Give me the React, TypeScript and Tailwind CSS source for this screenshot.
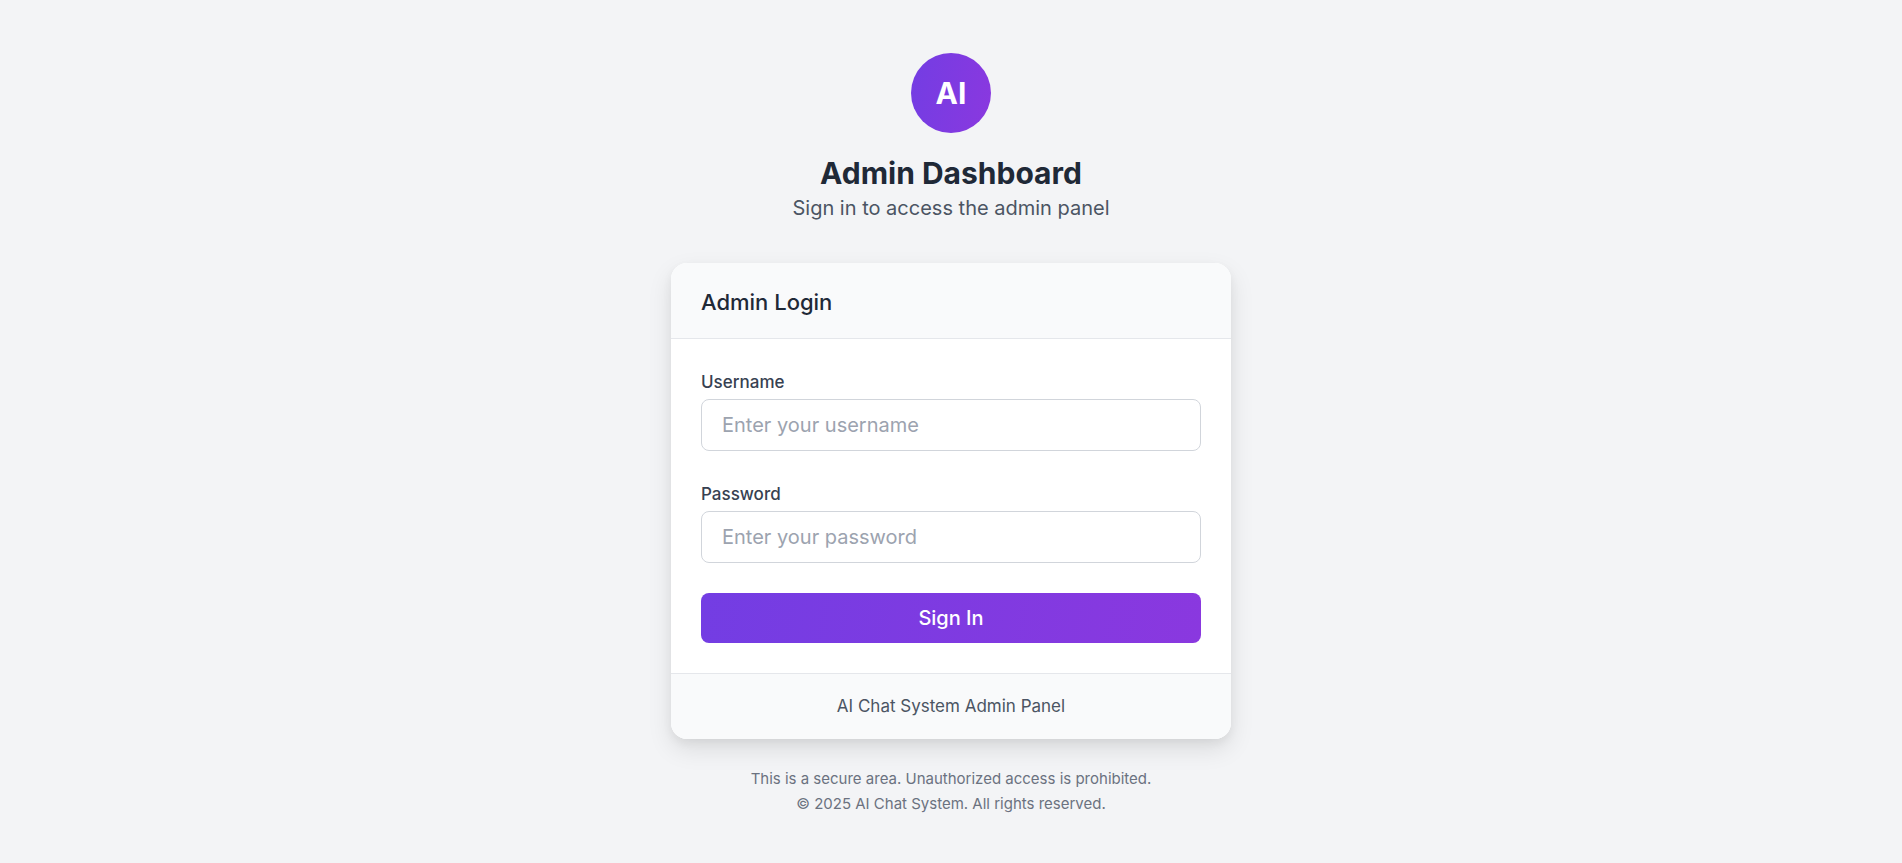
import React from "react";

type FieldProps = {
  id: string;
  label: string;
  type: string;
  placeholder: string;
};

function Field({ id, label, type, placeholder }: FieldProps) {
  return (
    <div>
      <label htmlFor={id} className="mb-1 block text-[17px] leading-[26px] font-medium text-[#374151]">
        {label}
      </label>
      <input
        id={id}
        name={id}
        type={type}
        placeholder={placeholder}
        className="block h-[52px] w-full rounded-lg border border-[#d1d5db] bg-white px-5 text-xl text-[#111827] placeholder:text-[#9ca3af]"
      />
    </div>
  );
}

export default function App() {
  return (
    <div className="flex min-h-screen flex-col items-center justify-center bg-[#f3f4f6] px-4 pt-1 font-['Inter',sans-serif]">
      <main className="w-full max-w-[560px]">
        <header className="mb-10 text-center">
          <div className="mx-auto mb-5 flex size-20 items-center justify-center rounded-full bg-linear-[100deg] from-[#733de3] to-[#8a38df] text-3xl font-bold text-white">
            AI
          </div>
          <h1 className="text-3xl leading-10 font-bold text-[#1f2937]">Admin Dashboard</h1>
          <p className="text-xl leading-[30px] text-[#4b5563]">Sign in to access the admin panel</p>
        </header>
        <section className="overflow-hidden rounded-2xl bg-white shadow-[0_10px_25px_rgba(0,0,0,0.1),0_4px_10px_rgba(0,0,0,0.05)]">
          <div className="border-b border-[#e5e7eb] bg-[#f9fafb] px-[30px] pt-6 pb-5">
            <h2 className="text-[22px] leading-[31px] font-medium text-[#1f2937]">Admin Login</h2>
          </div>
          <form className="flex flex-col gap-[30px] p-[30px]" onSubmit={(e) => e.preventDefault()}>
            <Field id="username" label="Username" type="text" placeholder="Enter your username" />
            <Field id="password" label="Password" type="password" placeholder="Enter your password" />
            <button
              type="submit"
              className="h-[50px] w-full rounded-lg bg-linear-[100deg] from-[#733de3] to-[#8a38df] text-xl font-medium text-white"
            >
              Sign In
            </button>
          </form>
          <div className="border-t border-[#e5e7eb] bg-[#f9fafb] px-[30px] py-5 text-center">
            <p className="text-[17px] leading-[25px] text-[#4b5563]">AI Chat System Admin Panel</p>
          </div>
        </section>
        <footer className="mt-[30px] flex flex-col gap-[5px] text-center text-[15px] leading-5 text-[#6b7280]">
          <p>This is a secure area. Unauthorized access is prohibited.</p>
          <p>© 2025 AI Chat System. All rights reserved.</p>
        </footer>
      </main>
    </div>
  );
}
